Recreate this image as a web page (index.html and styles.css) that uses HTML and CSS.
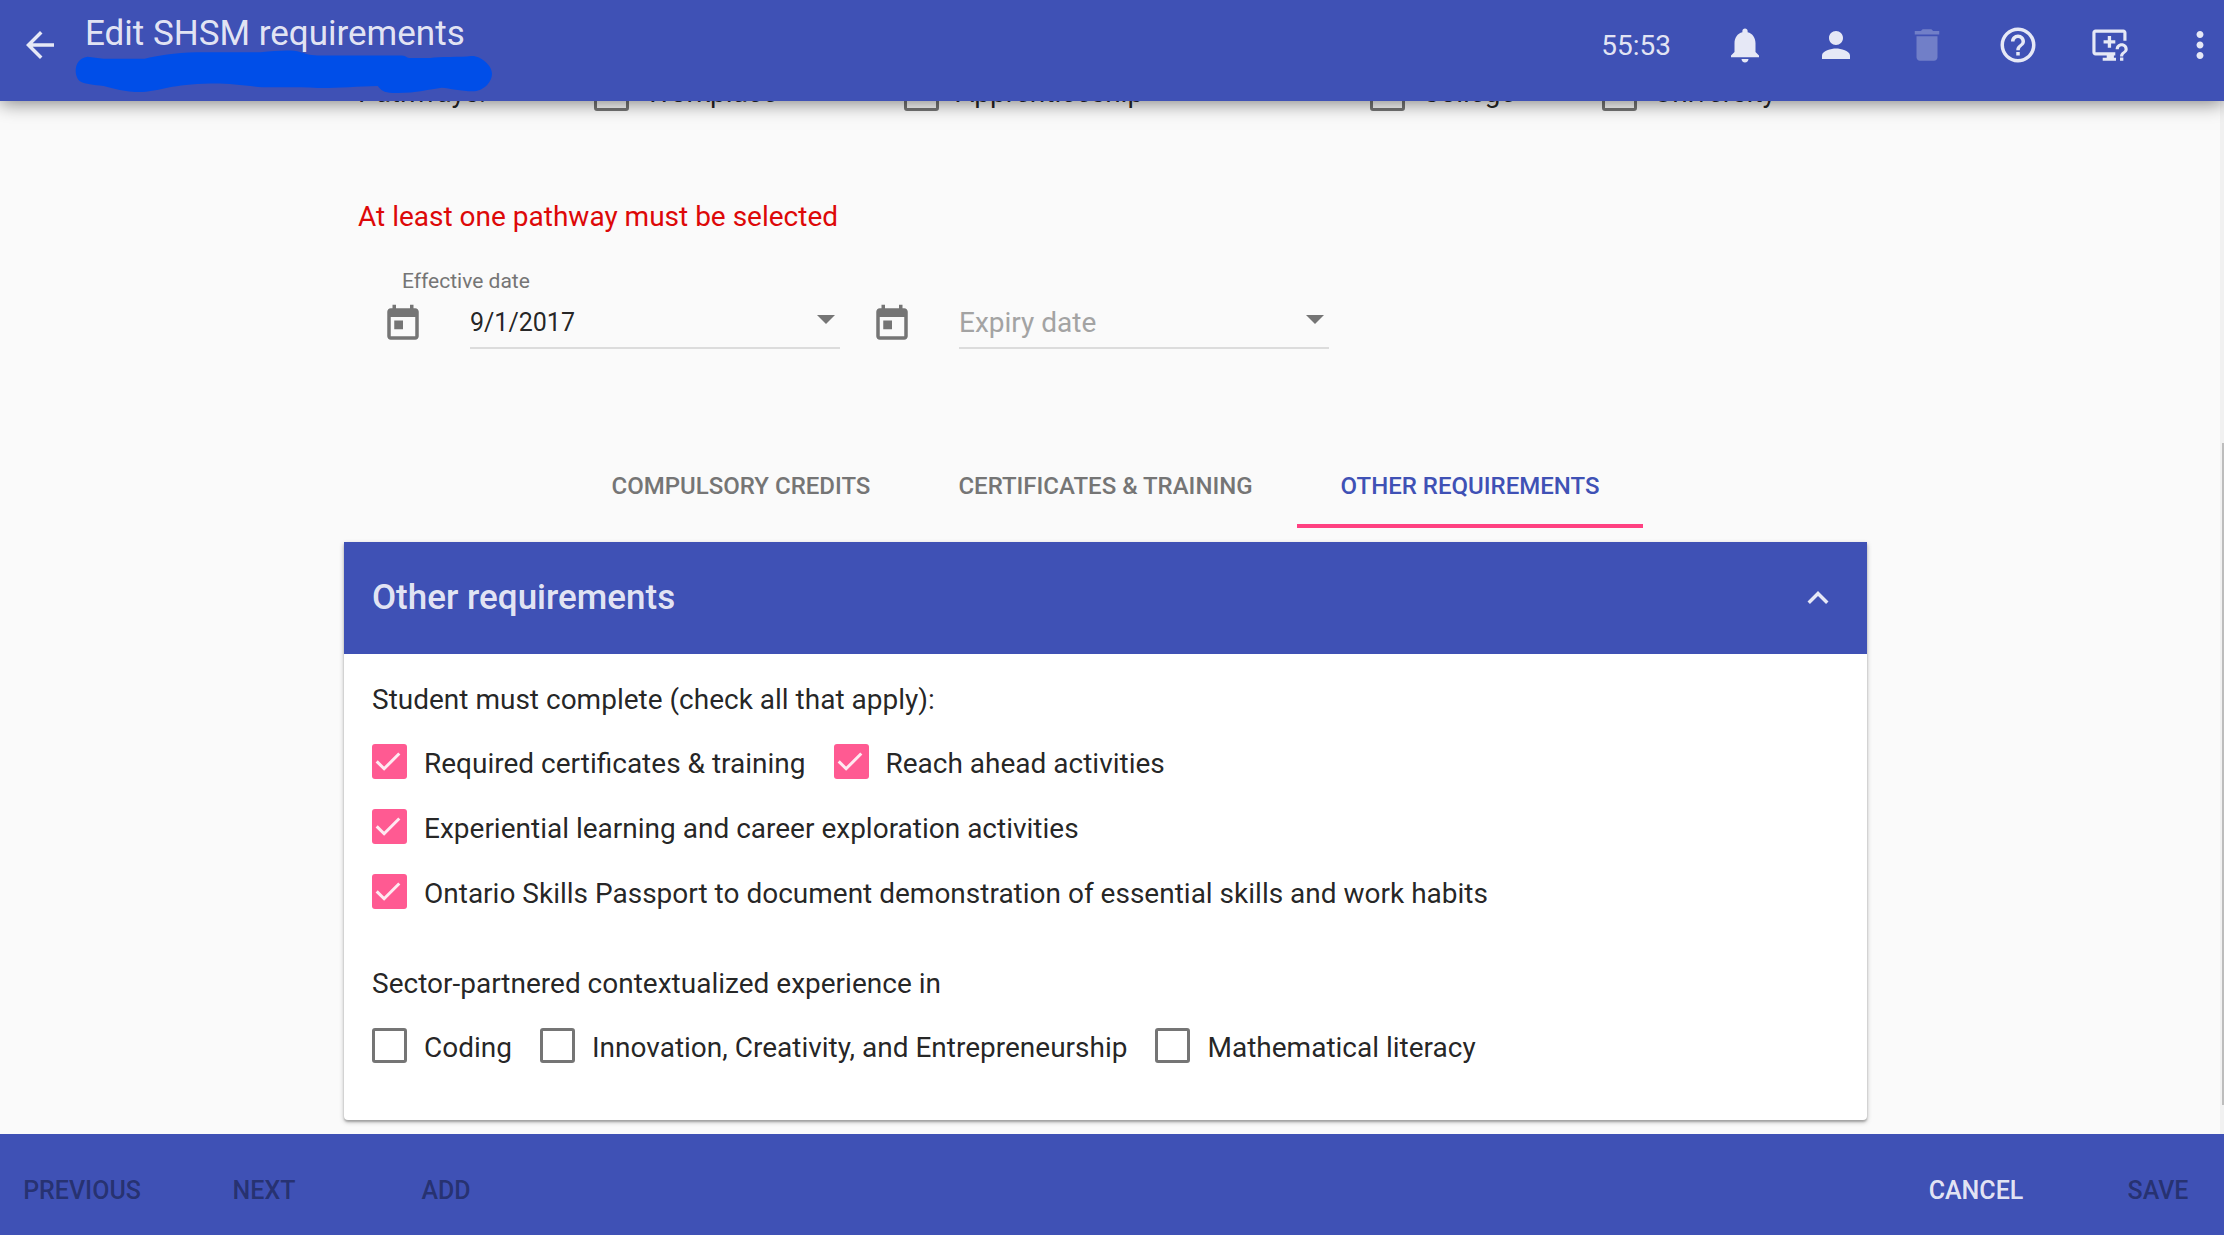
FILE: index.html
```html
<!DOCTYPE html>
<html lang="en">
<head>
<meta charset="utf-8">
<meta name="viewport" content="width=device-width, initial-scale=1">
<title>Edit SHSM requirements</title>
<link rel="stylesheet" href="styles.css">
</head>
<body>
<header class="toolbar">
  <button class="icon-button" type="button" aria-label="Back"><svg class="icon" viewBox="0 0 24 24"><path d="M20 11H7.83l5.59-5.59L12 4l-8 8 8 8 1.41-1.41L7.83 13H20v-2z"/></svg></button>
  <h1 class="toolbar-title">Edit SHSM requirements</h1>
  <svg class="redaction" viewBox="210 150 1168 128" preserveAspectRatio="none" aria-hidden="true"><path d="M245 170L290 176H405C440 168 490 158 550 157H730C780 151 820 149 840 156C855 160 865 166 890 166H1125C1140 167 1138 174 1150 174H1205C1230 169 1290 172 1320 168C1345 166 1378 195 1378 220C1378 250 1350 273 1325 273C1290 272 1260 264 1237 262C1200 267 1160 279 1100 278C1075 277 1065 268 1058 257C1000 258 940 264 890 263C840 260 780 261 735 261C680 256 640 249 590 250C480 252 450 272 400 275C350 276 320 264 290 257C260 254 240 252 225 244C205 230 205 175 245 170Z"/></svg>
  <div class="toolbar-actions">
    <span class="timer">55:53</span>
    <button class="icon-button" type="button" aria-label="Notifications"><svg class="icon" viewBox="0 0 24 24"><path d="M12 22c1.1 0 2-.9 2-2h-4c0 1.1.89 2 2 2zm6-6v-5c0-3.07-1.64-5.64-4.5-6.32V4c0-.83-.67-1.500-1.500-1.500s-1.500.67-1.500 1.500v.68C7.630 5.360 6 7.920 6 11v5l-2 2v1h16v-1l-2-2z"/></svg></button>
    <button class="icon-button" type="button" aria-label="Account"><svg class="icon" viewBox="0 0 24 24"><path d="M12 12c2.210 0 4-1.790 4-4s-1.790-4-4-4-4 1.790-4 4 1.790 4 4 4zm0 2c-2.670 0-8 1.340-8 4v2h16v-2c0-2.660-5.330-4-8-4z"/></svg></button>
    <button class="icon-button" type="button" aria-label="Delete" disabled><svg class="icon" viewBox="0 0 24 24"><path d="M6 19c0 1.100.9 2 2 2h8c1.100 0 2-.9 2-2V7H6v12zM19 4h-3.500l-1-1h-5l-1 1H5v2h14V4z"/></svg></button>
    <button class="icon-button" type="button" aria-label="Help"><svg class="icon" viewBox="0 0 24 24"><path d="M11 18h2v-2h-2v2zm1-16C6.480 2 2 6.480 2 12s4.480 10 10 10 10-4.480 10-10S17.520 2 12 2zm0 18c-4.410 0-8-3.590-8-8s3.590-8 8-8 8 3.590 8 8-3.590 8-8 8zm0-14c-2.210 0-4 1.790-4 4h2c0-1.100.9-2 2-2s2 .9 2 2c0 2-3 1.750-3 5h2c0-2.250 3-2.500 3-5 0-2.210-1.790-4-4-4z"/></svg></button>
    <button class="icon-button" type="button" aria-label="Request support"><svg class="icon" viewBox="0 0 24 24"><path d="M20.200 3.200H4.300c-1 0-1.800.8-1.800 1.800v11.200c0 1 .8 1.800 1.800 1.800h6.400v1.300H8.400V21H16v-1.700h-1.200V18h.8v-1.800H4.300V5h15.900v4.600H22V5c0-1-.8-1.800-1.800-1.800z"/><path d="M11.300 6.900h1.900v2.400h2.400v1.900h-2.400v2.400h-1.900v-2.400H8.900V9.300h2.400z"/><path d="M18.300 19.200h1.900V21h-1.900zM19.250 11c-1.900 0-3.450 1.500-3.450 3.400h1.800c0-.9.700-1.650 1.650-1.650s1.650.75 1.650 1.650c0 1.500-2.600 1.500-2.600 4.100h1.800c0-1.800 2.600-2.100 2.600-4.100 0-1.900-1.550-3.400-3.450-3.400z"/></svg></button>
    <button class="icon-button" type="button" aria-label="More"><svg class="icon" viewBox="0 0 24 24"><path d="M12 8c1.100 0 2-.9 2-2s-.9-2-2-2-2 .9-2 2 .9 2 2 2zm0 2c-1.100 0-2 .9-2 2s.9 2 2 2 2-.9 2-2-.9-2-2-2zm0 6c-1.100 0-2 .9-2 2s.9 2 2 2 2-.9 2-2-.9-2-2-2z"/></svg></button>
  </div>
</header>

<main class="content">
  <form class="form" id="requirements">
    <div class="pathways" role="group" aria-labelledby="pathways-label">
      <span class="option-text" id="pathways-label">Pathways:</span>
      <label class="option"><input class="checkbox" type="checkbox"><span class="option-text">Workplace</span></label>
      <label class="option"><input class="checkbox" type="checkbox"><span class="option-text">Apprenticeship</span></label>
      <label class="option"><input class="checkbox" type="checkbox"><span class="option-text">College</span></label>
      <label class="option"><input class="checkbox" type="checkbox"><span class="option-text">University</span></label>
    </div>
    <p class="error">At least one pathway must be selected</p>

    <div class="dates">
      <div class="date-field">
        <label class="date-label" for="effective">Effective date</label>
        <svg class="icon date-icon" viewBox="0 0 24 24"><path d="M19 3h-1V1h-2v2H8V1H6v2H5c-1.110 0-1.990.9-1.990 2L3 19c0 1.100.89 2 2 2h14c1.100 0 2-.9 2-2V5c0-1.100-.9-2-2-2zm0 16H5V8h14v11zM7 10h5v5H7z"/></svg>
        <div class="date-control">
          <input class="date-input" id="effective" type="text" placeholder="Effective date" value="9/1/2017">
          <button class="date-toggle" type="button" aria-label="Open effective date calendar"></button>
        </div>
      </div>
      <div class="date-field">
        <svg class="icon date-icon" viewBox="0 0 24 24"><path d="M19 3h-1V1h-2v2H8V1H6v2H5c-1.110 0-1.990.9-1.990 2L3 19c0 1.100.89 2 2 2h14c1.100 0 2-.9 2-2V5c0-1.100-.9-2-2-2zm0 16H5V8h14v11zM7 10h5v5H7z"/></svg>
        <div class="date-control">
          <input class="date-input" type="text" placeholder="Expiry date" aria-label="Expiry date">
          <button class="date-toggle" type="button" aria-label="Open expiry date calendar"></button>
        </div>
      </div>
    </div>

    <div class="tabs" role="tablist">
      <button class="tab" type="button" role="tab" aria-selected="false">COMPULSORY CREDITS</button>
      <button class="tab" type="button" role="tab" aria-selected="false">CERTIFICATES &amp; TRAINING</button>
      <button class="tab" type="button" role="tab" aria-selected="true">OTHER REQUIREMENTS</button>
    </div>

    <section class="card">
      <div class="card-header">
        <h2 class="card-title">Other requirements</h2>
        <button class="icon-button" type="button" aria-label="Collapse"><svg class="icon" viewBox="0 0 24 24"><path d="M12 8l-6 6 1.410 1.410L12 10.830l4.590 4.580L18 14z"/></svg></button>
      </div>
      <div class="card-body">
        <fieldset class="group">
          <legend class="group-title">Student must complete (check all that apply):</legend>
          <div class="option-row">
            <label class="option"><input class="checkbox" type="checkbox" checked><span class="option-text">Required certificates &amp; training</span></label>
            <label class="option"><input class="checkbox" type="checkbox" checked><span class="option-text">Reach ahead activities</span></label>
          </div>
          <div class="option-row">
            <label class="option"><input class="checkbox" type="checkbox" checked><span class="option-text">Experiential learning and career exploration activities</span></label>
          </div>
          <div class="option-row">
            <label class="option"><input class="checkbox" type="checkbox" checked><span class="option-text">Ontario Skills Passport to document demonstration of essential skills and work habits</span></label>
          </div>
        </fieldset>
        <fieldset class="group">
          <legend class="group-title">Sector-partnered contextualized experience in</legend>
          <div class="option-row">
            <label class="option"><input class="checkbox" type="checkbox"><span class="option-text">Coding</span></label>
            <label class="option"><input class="checkbox" type="checkbox"><span class="option-text">Innovation, Creativity, and Entrepreneurship</span></label>
            <label class="option"><input class="checkbox" type="checkbox"><span class="option-text">Mathematical literacy</span></label>
          </div>
        </fieldset>
      </div>
    </section>
  </form>
  <div class="scrollbar" aria-hidden="true"><div class="scrollbar-thumb"></div></div>
</main>

<footer class="footer">
  <div class="footer-group">
    <button class="text-button" type="button" disabled>PREVIOUS</button>
    <button class="text-button" type="button" disabled>NEXT</button>
    <button class="text-button" type="button" disabled>ADD</button>
  </div>
  <div class="footer-group">
    <button class="text-button" type="button">CANCEL</button>
    <button class="text-button" type="submit" form="requirements" disabled>SAVE</button>
  </div>
</footer>
</body>
</html>
```
FILE: styles.css
```css
:root {
  --primary: #3f51b5;
  --accent: #ff4081;
  --on-primary: rgba(255, 255, 255, 0.87);
  --text: rgba(0, 0, 0, 0.87);
  --muted: #757575;
}

*,
*::after {
  box-sizing: border-box;
}

body {
  display: flex;
  flex-direction: column;
  height: 100vh;
  margin: 0;
  background: #fafafa;
  color: var(--text);
  font: 28px/36px Roboto, "Liberation Sans", sans-serif;
}

button {
  padding: 0;
  border: 0;
  background: none;
  color: inherit;
  font: inherit;
}

.icon {
  display: block;
  width: 42px;
  height: 42px;
  fill: currentColor;
}

.icon-button:disabled {
  opacity: 0.3;
}

/* Top bar */
.toolbar {
  position: relative;
  z-index: 1;
  display: flex;
  flex: none;
  align-items: flex-start;
  padding: 12px 3px 12px 19px;
  min-height: 101px;
  background: var(--primary);
  box-shadow: 0 2px 18px rgba(0, 0, 0, 0.5);
  color: var(--on-primary);
}

.toolbar > .icon-button,
.toolbar-actions {
  margin-top: 12px;
}

.toolbar-title {
  flex: 1;
  margin: 0 0 0 24px;
  font-size: 35px;
  font-weight: 400;
  line-height: 44px;
}

.redaction {
  position: absolute;
  top: 50px;
  left: 75px;
  width: 417px;
  height: 43px;
  fill: #004ee8;
}

.toolbar-actions {
  display: flex;
  align-items: center;
  gap: 49px;
}

.timer {
  margin-right: 4px;
  padding-top: 2px;
}

/* Scrolled page area */
.content {
  position: relative;
  flex: 1;
  min-height: 0;
  overflow: hidden;
  padding: 0 13px 0 0;
}

.form {
  max-width: 1523px;
  margin: -26px auto 0;
}

.pathways {
  display: grid;
  grid-template-columns: 236fr 310fr 466fr 232fr 251fr;
  align-items: center;
  height: 35px;
  padding: 0 14px;
}

.option {
  display: flex;
  align-items: center;
  gap: 17px;
  height: 35px;
}

.option-text {
  padding-top: 4px;
  white-space: nowrap;
}

.pathways .option-text {
  padding-top: 0;
}

.checkbox {
  display: grid;
  flex: none;
  width: 35px;
  height: 35px;
  margin: 0;
  appearance: none;
  border: 3px solid var(--muted);
  border-radius: 3px;
}

.checkbox:checked {
  border: 0;
  background: #ff5a92;
}

.checkbox:checked::after {
  width: 12px;
  height: 23px;
  margin: 3px 0 0 10px;
  border: solid var(--on-primary);
  border-width: 0 3px 3px 0;
  content: "";
  transform: rotate(45deg);
}

.error {
  margin: 89px 14px 34px;
  color: #dd0808;
}

.dates {
  display: flex;
  align-items: flex-end;
  gap: 31px;
  padding-left: 38px;
}

.date-field {
  display: grid;
  grid-template-columns: 42px 370px;
  column-gap: 46px;
  row-gap: 10px;
}

.date-label {
  grid-column: 1 / -1;
  padding-left: 20px;
  color: var(--muted);
  font-size: 21px;
  line-height: 24px;
}

.date-icon {
  color: var(--muted);
}

.date-control {
  display: flex;
  height: 46px;
  border-bottom: 2px solid #dcdcdc;
}

.date-input {
  flex: 1;
  min-width: 0;
  padding: 0 0 4px;
  border: 0;
  outline: 0;
  background: none;
  color: var(--text);
  font: inherit;
  font-size: 25px;
}

.date-input:placeholder-shown {
  font-size: 28px;
}

.date-input::placeholder {
  color: #a3a3a3;
  opacity: 1;
}

.date-toggle {
  width: 18px;
  height: 9px;
  margin: 12px 5px 0 0;
  background: var(--muted);
  clip-path: polygon(0 0, 100% 0, 50% 100%);
}

/* Tabs */
.tabs {
  display: flex;
  justify-content: center;
  margin: 95px 0 14px;
}

.tab {
  padding: 0 44px;
  color: var(--muted);
  font-size: 24px;
  font-weight: 500;
  line-height: 84px;
}

.tab[aria-selected="true"] {
  box-shadow: inset 0 -4px var(--accent);
  color: var(--primary);
}

/* Requirement card */
.card {
  border-radius: 0 0 4px 4px;
  background: #fff;
  box-shadow: 0 2px 5px rgba(0, 0, 0, 0.26), 0 2px 2px rgba(0, 0, 0, 0.2);
}

.card-header {
  display: flex;
  align-items: center;
  justify-content: space-between;
  height: 112px;
  padding: 0 28px;
  background: var(--primary);
  color: var(--on-primary);
}

.card-title {
  margin: 0;
  font-size: 35px;
  font-weight: 500;
  line-height: 42px;
}

.card-body {
  display: grid;
  gap: 57px;
  padding: 28px 28px 57px;
}

.group {
  display: grid;
  gap: 30px;
  min-width: 0;
  margin: 0;
  padding: 0;
  border: 0;
}

.group-title {
  margin-bottom: 26px;
  padding: 0;
}

.option-row {
  display: flex;
  flex-wrap: wrap;
  gap: 28px;
}

.scrollbar {
  position: absolute;
  top: 0;
  right: 0;
  bottom: 0;
  width: 4px;
  padding: 342px 0 29px 2px;
  background: #f1f1f1;
}

.scrollbar-thumb {
  height: 100%;
  background: #bdbdbd;
}

/* Bottom bar */
.footer {
  display: flex;
  flex: none;
  align-items: center;
  justify-content: space-between;
  height: 101px;
  padding: 12px 3px 0 19px;
  background: var(--primary);
}

.footer-group {
  display: flex;
  gap: 56px;
}

.text-button {
  min-width: 126px;
  color: var(--on-primary);
  font-size: 25px;
  font-weight: 500;
}

.text-button:disabled {
  color: rgba(0, 0, 0, 0.4);
}
```
